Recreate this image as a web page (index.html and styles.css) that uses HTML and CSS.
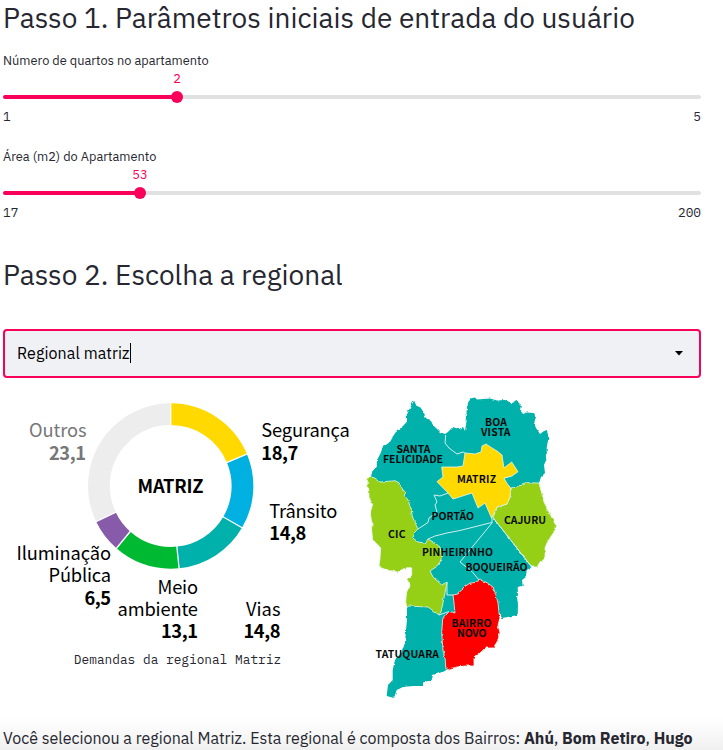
FILE: index.html
```html
<!DOCTYPE html>
<html lang="pt-BR">
<head>
<meta charset="utf-8">
<title>Escolha a regional</title>
<link rel="stylesheet" href="styles.css">
</head>
<body>
<main class="page">
  <h2 class="heading">Passo 1. Parâmetros iniciais de entrada do usuário</h2>

  <section class="slider rooms">
    <div class="slider-label">Número de quartos no apartamento</div>
    <div class="track"><div class="fill"></div><div class="thumb"><span class="value">2</span></div></div>
    <div class="limits"><span>1</span><span>5</span></div>
  </section>

  <section class="slider area">
    <div class="slider-label">Área (m2) do Apartamento</div>
    <div class="track"><div class="fill"></div><div class="thumb"><span class="value">53</span></div></div>
    <div class="limits"><span>17</span><span>200</span></div>
  </section>

  <h2 class="heading second">Passo 2. Escolha a regional</h2>

  <div class="select">
    <div class="select-value"><span>Regional matriz</span><i class="caret"></i></div>
    <svg class="arrow" viewBox="0 0 8 5"><path d="M0 0H8L4 4.6Z"/></svg>
  </div>

  <div class="figures">
    <figure class="chart">
      <svg viewBox="3 390 349 255" width="349" height="255">
        <g class="ring" transform="rotate(-90 170.7 486)">
          <circle class="s-yellow" cx="170.7" cy="486" r="71.8" pathLength="100" stroke-dasharray="18.7 81.3"/>
          <circle class="s-blue" cx="170.7" cy="486" r="71.8" pathLength="100" stroke-dasharray="14.7 85.3" stroke-dashoffset="-18.7"/>
          <circle class="s-teal" cx="170.7" cy="486" r="71.8" pathLength="100" stroke-dasharray="14.9 85.1" stroke-dashoffset="-33.4"/>
          <circle class="s-green" cx="170.7" cy="486" r="71.8" pathLength="100" stroke-dasharray="13.1 86.9" stroke-dashoffset="-48.3"/>
          <circle class="s-purple" cx="170.7" cy="486" r="71.8" pathLength="100" stroke-dasharray="6.5 93.5" stroke-dashoffset="-61.4"/>
          <circle class="s-grey" cx="170.7" cy="486" r="71.8" pathLength="100" stroke-dasharray="32.1 67.9" stroke-dashoffset="-67.9"/>
        </g>
        <path class="gaps" d="M170.7 427V402M226 462.800L248 453.700M222.500 516.500L243 528.200M176.700 545L179.200 569.500M131 530.500L115.500 549.500M116.500 512L95.500 522"/>
        <g class="labels">
          <text class="b" x="137.500" y="493" textLength="66">MATRIZ</text>
          <text x="261.300" y="437" textLength="88.500">Segurança</text>
          <text class="b" x="261.300" y="459.500" textLength="37">18,7</text>
          <text x="269.300" y="517.500" textLength="68">Trânsito</text>
          <text class="b" x="269.300" y="540" textLength="37">14,8</text>
          <text x="246" y="616" textLength="34.500">Vias</text>
          <text class="b" x="243.500" y="638" textLength="37">14,8</text>
          <text x="157.500" y="593.500" textLength="40.500">Meio</text>
          <text x="117.500" y="616" textLength="80.500">ambiente</text>
          <text class="b" x="161" y="638" textLength="37">13,1</text>
          <text x="16.500" y="560" textLength="94.500">Iluminação</text>
          <text x="48.500" y="581.500" textLength="62.500">Pública</text>
          <text class="b" x="84.500" y="604.500" textLength="26.500">6,5</text>
          <text class="muted" x="29" y="437" textLength="57.500">Outros</text>
          <text class="b muted" x="49" y="459.500" textLength="37">23,1</text>
        </g>
      </svg>
      <figcaption>Demandas da regional Matriz</figcaption>
    </figure>

    <svg class="map" viewBox="352 390 349 315" width="349" height="315">
      <defs>
        <filter id="coast" x="-5%" y="-5%" width="110%" height="110%">
          <feTurbulence type="fractalNoise" baseFrequency=".22" numOctaves="2" seed="4" result="n"/>
          <feDisplacementMap in="SourceGraphic" in2="n" scale="3" xChannelSelector="R" yChannelSelector="G"/>
        </filter>
      </defs>
      <g filter="url(#coast)">
        <path class="f-teal" d="M414 400.500L416.500 406 420.500 407.500 423.500 412 426.500 418.500 431 421 433 425 436 428 440 432 445 434 448 432 452.700 427 459 429 463 427 465 431 467 418 466.500 412 468 403 470 398.500 475 397.500 477 399.500 490 398.500 497 400.500 505 400 512 403 517 401 521 405 520 410 523 414 527 412.500 533 413 536 417 534 423 536 428 540 434 544 431 547 430 548.300 438 546.700 448 547 458 544 465 545 473 541 477 539 483 531.700 567 526.700 570 526 577 522 580 522.700 586 517.700 587 518 595 517 597 518 605 517.700 615 510 616.500 502 618 499 613 446 670 444 671.500 433 675 431.700 680 423 682.500 423 686 413 686 403 687 396.700 690 394 698 386.700 696 388 685 392.700 680 392.700 670 395 660 401.700 652 405 643 406 630 407 620 407 606 415 600 420 575 420 560 400 530 385 495 371 478 371.700 472 376.700 467 377 460 380.700 453 382.700 447 390 442 395 433 403 426 407 421.500 406.700 415 410 408Z"/>
        <path class="f-lime edge" d="M368 478L372 477 380 482 395 480.700 399 482.700 403 490 406 492.700 404 495 408 500 410.700 508 412.700 517 415 523 418 529 415 532 413 538 418 542 425 543 428 539 435 543 440 547 441.700 557 439 565 430 571 433 577 441.700 585 447 582 445 593 441 612 439 615 435 612 428 607 407 606 405.700 602 406.700 592 410 585 407.500 580 411.700 575 411.700 567 403 569 398 572 387 570 379 567 380 558 380.700 548 376 543 372.700 540 371.700 530 372 522 370 513 372.700 505 369 497 369 490 366.700 487Z"/>
        <path class="f-lime edge" d="M510.700 488L518 486.700 527 482.700 539 483 541.700 493 544 502 548 510 552 518 555.700 525 554 532 550 538 547 543 545 548 545 557 540 562 537 567 531.700 567 493 517.500 497 507 507 504 510 497Z"/>
        <path class="f-red edge" d="M453 595L458 594 463 588 470 583 475 582.500 480 580 487 582.700 493 587 496 595 498 603 499 613 500 618 498 625 500 633 497 642 493 648 485 648 480 653 474 658 474 666 465 666 457 667 446 670 445 658 443 650 441.700 633 442.700 619 449 611.500 455 613 454 603Z"/>
      </g>
      <path class="border" d="M445.700 435L445 443 449 448 457 454 463 452 465 453M418 529L428 522.500 429 518 437 512 435 505 437 502 434 495 440 496 448 493M428 539L435 536 447 533 460 530.500 491.700 522.500M492 519V523L460 562 465 566 472 571.500 479 580M493 517.500L531.700 567M447 582V595H453M439 615L449 611.500M504 478L511 476"/>
      <path class="f-yellow edge" d="M486 444L492 448 497 451 502 455 503 462 504 468 511.700 462 518 471.700 512 476 504 478 506.700 483 510.700 488 510 497 507 504 497 507 491.700 518.500 485 503 478 508 472 493 453 499 448 493 437 481.700 443 477 441.700 467 457 467 463 466 465 453 475 454 481 452 482 446Z"/>
      <g class="places">
        <text x="396.500" y="452.500" textLength="34">SANTA</text>
        <text x="383" y="463" textLength="60">FELICIDADE</text>
        <text x="485" y="425.700" textLength="22">BOA</text>
        <text x="481" y="436" textLength="29.500">VISTA</text>
        <text x="457" y="483" textLength="39">MATRIZ</text>
        <text x="431.500" y="520" textLength="42.500">PORTÃO</text>
        <text x="504" y="523.500" textLength="42">CAJURU</text>
        <text x="388" y="538" textLength="17.500">CIC</text>
        <text x="422" y="556" textLength="71">PINHEIRINHO</text>
        <text x="465.500" y="570.500" textLength="62">BOQUEIRÃO</text>
        <text x="451.500" y="627" textLength="40">BAIRRO</text>
        <text x="457" y="637" textLength="29.500">NOVO</text>
        <text x="375.500" y="657.500" textLength="63.500">TATUQUARA</text>
      </g>
    </svg>
  </div>

  <p class="summary">Você selecionou a regional Matriz. Esta regional é composta dos Bairros: <b>Ahú</b>, <b>Bom Retiro</b>, <b>Hugo</b></p>
</main>
</body>
</html>
```
FILE: styles.css
```css
* { box-sizing: border-box; }
html, body { margin: 0; height: 750px; overflow: hidden; }
body {
  background: linear-gradient(#fff 718px, #f0f0f0 750px);
  color: #262730;
  font-family: "IBM Plex Sans", Roboto, sans-serif;
}
.page { width: 698px; margin-left: 3px; white-space: nowrap; }
.heading { margin: 0; height: 52px; font-size: 28px; line-height: 36px; font-weight: 400; }
.second { height: 72px; margin-top: 13px; }
.slider { height: 96px; }
.slider-label { height: 43px; font-size: 12.8px; line-height: 17px; }
.track { position: relative; height: 4px; margin-bottom: 8px; border-radius: 2px; background: #e1e1e1; }
.slider .fill { height: 4px; border-radius: 2px; background: #f9005b; }
.rooms .fill { width: 25%; }
.area .fill { width: 19.7%; }
.thumb { position: absolute; top: -4px; width: 12px; height: 12px; margin-left: -6px; border-radius: 50%; background: #f9005b; }
.rooms .thumb { left: 174px; }
.area .thumb { left: 137px; }
.value { position: absolute; left: 50%; bottom: 16px; transform: translateX(-50%); color: #f9005b; font-size: 12.8px; line-height: 17px; }
.limits { display: flex; justify-content: space-between; font: 12.8px/20px "IBM Plex Mono", "Liberation Mono", monospace; }
.select {
  display: flex; align-items: center; justify-content: space-between;
  height: 49px; padding: 0 16px 0 12px; border: 2px solid #f9005b; border-radius: 4px;
  background: #f0f1f5; color: #000;
}
.select-value { display: flex; align-items: center; padding-bottom: 1px; font-size: 16px; line-height: 24px; letter-spacing: .08px; }
.caret { width: 1px; height: 20px; background: #000; }
.arrow { width: 8px; height: 5px; }
.figures { display: grid; grid-template-columns: 349px 349px; height: 315px; margin-top: 12px; }
.chart { margin: 0; }
.chart svg, .map { display: block; }
figcaption { margin-top: 5px; text-align: center; font: 12.8px/20px "IBM Plex Mono", "Liberation Mono", monospace; }
.ring circle { fill: none; stroke-width: 21.700px; }
.s-yellow { stroke: #ffd900; }
.s-blue { stroke: #00b0e1; }
.s-teal { stroke: #00b0aa; }
.s-green { stroke: #00b932; }
.s-purple { stroke: #885baa; }
.s-grey { stroke: #ededed; }
.gaps { stroke: #fff; stroke-width: 1.300px; }
.labels { font: 18.300px "Noto Sans CJK SC", sans-serif; fill: #000; }
.labels .b { font-weight: 700; }
.labels .muted { fill: #777; }
.f-teal { fill: #00b0aa; }
.f-lime { fill: #95d012; }
.f-yellow { fill: #ffd900; }
.f-red { fill: #f00; }
.edge { stroke: #e8f7ee; stroke-width: .8px; stroke-linejoin: round; }
.border { fill: none; stroke: #d2f0ee; stroke-width: 1px; }
.places { font: 700 10.400px "Noto Sans CJK SC", sans-serif; fill: #0a0a0a; }
.summary { margin: 21px 0 0; font-size: 16px; line-height: 24px; }
```
